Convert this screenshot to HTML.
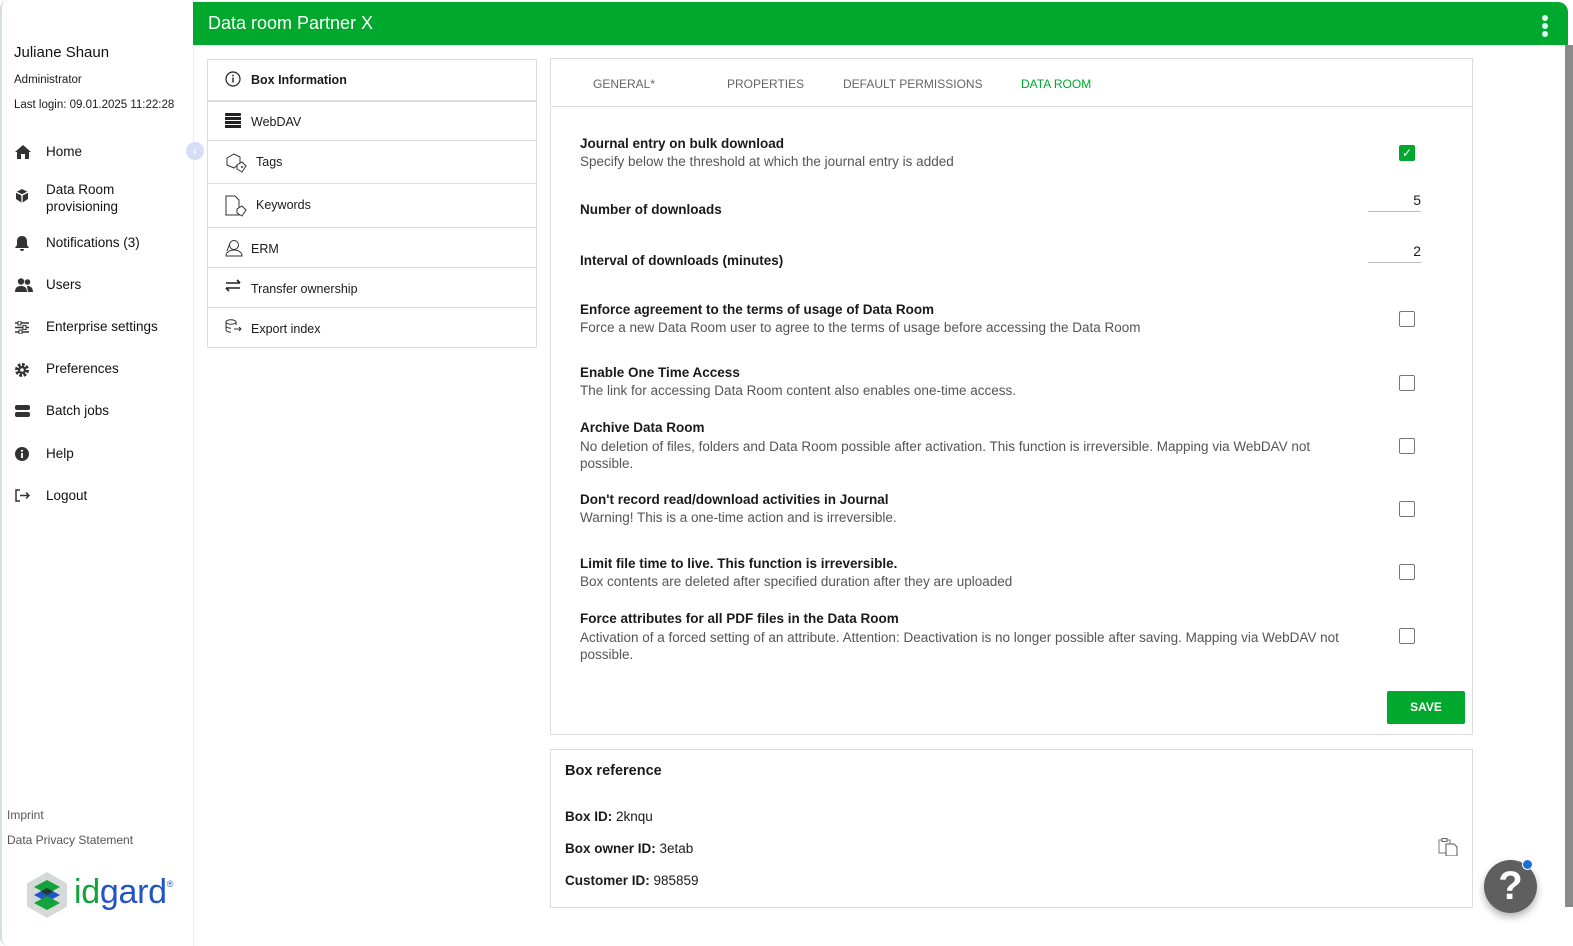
<!DOCTYPE html>
<html><head><style>
*{margin:0;padding:0;box-sizing:border-box}
body{width:1573px;height:946px;overflow:hidden;background:#fff;font-family:"Liberation Sans",sans-serif;color:#1a1a1a;position:relative}
.a{position:absolute;white-space:nowrap}
.side{position:absolute;left:0;top:0;width:194px;height:946px;background:#fff;border-left:2px solid #d3e0e6;border-right:1px solid #eee;border-radius:8px 0 0 8px}
.nav{font-size:13.5px;color:#111}
.ico{position:absolute;left:15px}
.hdr{position:absolute;left:193px;top:2px;width:1375px;height:43px;background:#00a82d;border-radius:0 10px 0 0}
.ln{position:absolute;left:207px;width:330px;border:1px solid #ddd;border-bottom:none;height:41px;font-size:12.5px}
.ln span{position:absolute;left:43px;top:13px}
.ln svg{position:absolute;left:17px;top:11px}
.card{position:absolute;border:1px solid #ddd;background:#fff}
.t{font-size:13.5px;font-weight:bold;color:#1a1a1a}
.s{font-size:13.5px;color:#555}
.cb{position:absolute;left:1399px;width:16px;height:16px;border:1.5px solid #777;border-radius:2px}
.tab{font-size:12px;color:#666;top:77px}
</style></head><body>
<div class="side"></div>
<div class="a" style="left:14px;top:44px;font-size:15px;color:#111">Juliane Shaun</div>
<div class="a" style="left:14px;top:74px;font-size:11.5px">Administrator</div>
<div class="a" style="left:14px;top:99px;font-size:11.5px">Last login: 09.01.2025 11:22:28</div>
<div class="a" style="left:186px;top:142px;width:18px;height:18px;border-radius:50%;background:#d6def5;color:#fff;font-size:12px;text-align:center;line-height:18px">‹</div>

<svg class="ico" style="top:145px" width="16" height="14" viewBox="0 0 16 14"><path d="M8 0L0 7h2v7h4V9h4v5h4V7h2z" fill="#333"/></svg>
<div class="a nav" style="left:46px;top:144px">Home</div>
<svg class="ico" style="top:189px" width="14" height="14" viewBox="0 0 14 14"><path d="M7 0L1 3v7l6 4 6-4V3z" fill="#333"/><path d="M1 3l6 3 6-3M7 6v8" stroke="#fff" stroke-width="1.3" fill="none"/></svg>
<div class="a nav" style="left:46px;top:181px;line-height:17px">Data Room<br>provisioning</div>
<svg class="ico" style="top:236px" width="14" height="15" viewBox="0 0 14 15"><path d="M7 0c-3 0-5 2-5 5v4L0 12h14l-2-3V5c0-3-2-5-5-5zM5 13h4a2 2 0 0 1-4 0z" fill="#333"/></svg>
<div class="a nav" style="left:46px;top:235px">Notifications (3)</div>
<svg class="ico" style="top:278px" width="18" height="14" viewBox="0 0 18 14"><circle cx="6" cy="3.5" r="3.2" fill="#333"/><circle cx="12.5" cy="4" r="2.8" fill="#333"/><path d="M0 14c0-5 3-6 6-6s6 1 6 6zM12 8c3 0 6 1 6 6h-5z" fill="#333"/></svg>
<div class="a nav" style="left:46px;top:277px">Users</div>
<svg class="ico" style="top:321px" width="14" height="13" viewBox="0 0 14 13"><path d="M0 2h14M0 6.5h14M0 11h14" stroke="#333" stroke-width="1.4"/><rect x="3" y="0" width="3" height="4" fill="#fff" stroke="#333"/><rect x="8" y="4.5" width="3" height="4" fill="#fff" stroke="#333"/><rect x="4" y="9" width="3" height="4" fill="#fff" stroke="#333"/></svg>
<div class="a nav" style="left:46px;top:319px">Enterprise settings</div>
<svg class="ico" style="top:363px" width="14" height="14" viewBox="0 0 14 14"><circle cx="7" cy="7" r="5" fill="none" stroke="#333" stroke-width="4" stroke-dasharray="2.5 1.4"/><circle cx="7" cy="7" r="4" fill="#333"/><circle cx="7" cy="7" r="1.8" fill="#fff"/></svg>
<div class="a nav" style="left:46px;top:361px">Preferences</div>
<svg class="ico" style="top:405px" width="15" height="12" viewBox="0 0 15 12"><rect x="0" y="0" width="15" height="5" rx="2" fill="#333"/><rect x="0" y="7" width="15" height="5" rx="2" fill="#333"/></svg>
<div class="a nav" style="left:46px;top:403px">Batch jobs</div>
<svg class="ico" style="top:447px" width="14" height="14" viewBox="0 0 14 14"><circle cx="7" cy="7" r="7" fill="#333"/><rect x="6.1" y="6" width="1.8" height="5" fill="#fff"/><circle cx="7" cy="3.8" r="1.1" fill="#fff"/></svg>
<div class="a nav" style="left:46px;top:446px">Help</div>
<svg class="ico" style="top:489px" width="15" height="13" viewBox="0 0 15 13"><path d="M5 1H1v11h4M5 6.5h9M11 3.5l3 3-3 3" stroke="#333" stroke-width="1.5" fill="none"/></svg>
<div class="a nav" style="left:46px;top:488px">Logout</div>

<div class="a" style="left:7px;top:808px;font-size:12px;color:#555">Imprint</div>
<div class="a" style="left:7px;top:833px;font-size:12px;color:#555">Data Privacy Statement</div>
<svg class="a" style="left:26px;top:872px" width="42" height="46" viewBox="0 0 42 46"><path d="M21 0L41 11.5v23L21 46 1 34.5v-23z" fill="#d5dad8"/><path d="M21 8l13 7-13 7-13-7z" fill="#12a33a"/><path d="M21 16l13 7-13 7-13-7z" fill="#2255c4"/><path d="M21 16l6 3.5-6 3.5-6-3.5z" fill="#1f3d2a"/><path d="M21 24l13 7-13 7-13-7z" fill="#12a33a"/></svg>
<div class="a" style="left:74px;top:873px;font-size:34px;letter-spacing:-0.3px"><span style="color:#12a33a">id</span><span style="color:#2255c4">gard</span><sup style="font-size:9px;color:#2255c4;vertical-align:top;position:relative;top:6px">®</sup></div>

<div class="hdr"></div>
<div class="a" style="left:208px;top:13px;font-size:18px;color:#fff">Data room Partner X</div>
<div class="a" style="left:1542px;top:15px;width:6px"><div style="width:6px;height:6px;border-radius:50%;background:#dffff0;margin-bottom:2px"></div><div style="width:6px;height:6px;border-radius:50%;background:#dffff0;margin-bottom:2px"></div><div style="width:6px;height:6px;border-radius:50%;background:#dffff0"></div></div>
<div class="a" style="left:1565px;top:45px;width:8px;height:862px;background:#8a8a8a"></div>

<div class="ln" style="top:59px"><svg width="16" height="16" viewBox="0 0 16 16"><circle cx="8" cy="8" r="7" fill="none" stroke="#222" stroke-width="1.2"/><rect x="7.3" y="6.5" width="1.4" height="5" fill="#222"/><circle cx="8" cy="4.5" r="0.9" fill="#222"/></svg><span style="font-weight:bold">Box Information</span></div>
<div class="ln" style="top:100px;border-top:2px solid #ddd"><svg width="16" height="15" viewBox="0 0 16 15"><rect y="0" width="16" height="3" rx="1" fill="#222"/><rect y="4" width="16" height="3" fill="#222"/><rect y="8" width="16" height="3" fill="#222"/><rect y="12" width="16" height="3" fill="#222"/></svg><span>WebDAV</span></div>
<div class="ln" style="top:140px;height:43px"><svg width="22" height="22" viewBox="0 0 22 22" style="top:11px"><path d="M2 6l7-4 6 3v6l-6 5-7-3z" fill="none" stroke="#333"/><path d="M12 13l5-3 4 4-4 6-5-3z" fill="#fff" stroke="#333"/><circle cx="17" cy="15" r="1" fill="#333"/></svg><span style="left:48px;top:14px">Tags</span></div>
<div class="ln" style="top:183px;height:44px"><svg width="22" height="22" viewBox="0 0 22 22" style="top:11px"><path d="M1 1h9l4 4v15H1z" fill="none" stroke="#333"/><path d="M12 14l5-3 4 4-4 6-5-3z" fill="#fff" stroke="#333"/></svg><span style="left:48px;top:14px">Keywords</span></div>
<div class="ln" style="top:227px;height:40px"><svg width="18" height="18" viewBox="0 0 18 18"><circle cx="9" cy="6" r="4.5" fill="none" stroke="#333"/><path d="M1 17c0-4 4-6 8-6s8 2 8 6z" fill="none" stroke="#333"/><path d="M5 4l-3 8" stroke="#333"/></svg><span style="top:14px">ERM</span></div>
<div class="ln" style="top:267px;height:40px"><svg width="16" height="13" viewBox="0 0 16 13"><path d="M1 4h14M12 1l3 3M15 9H1M4 12l-3-3" stroke="#222" stroke-width="1.6" fill="none"/></svg><span style="top:14px">Transfer ownership</span></div>
<div class="ln" style="top:307px;height:41px;border-bottom:1px solid #ddd"><svg width="17" height="14" viewBox="0 0 17 14"><ellipse cx="6" cy="3" rx="5" ry="2.2" fill="none" stroke="#333"/><path d="M1 3v8c0 1.3 2.2 2.2 5 2.2M11 3v3M1 7c0 1.3 2.2 2.2 5 2.2M9 10h7M14 8l2 2-2 2" stroke="#333" fill="none"/></svg><span style="top:14px">Export index</span></div>

<div class="card" style="left:550px;top:58px;width:923px;height:677px"></div>
<div class="a" style="left:551px;top:106px;width:921px;height:1px;background:#ddd"></div>
<div class="a tab" style="left:593px">GENERAL*</div>
<div class="a tab" style="left:727px">PROPERTIES</div>
<div class="a tab" style="left:843px">DEFAULT PERMISSIONS</div>
<div class="a tab" style="left:1021px;color:#00a82d">DATA ROOM</div>

<div class="a t" style="left:580px;top:136px">Journal entry on bulk download</div>
<div class="a s" style="left:580px;top:154px">Specify below the threshold at which the journal entry is added</div>
<div class="a" style="left:1399px;top:145px;width:16px;height:16px;background:#00a82d;border-radius:2px;color:#fff;font-size:12px;text-align:center;line-height:16px">✓</div>

<div class="a t" style="left:580px;top:202px">Number of downloads</div>
<div class="a" style="left:1368px;top:192px;width:53px;text-align:right;font-size:14px">5</div>
<div class="a" style="left:1368px;top:211px;width:53px;height:1px;background:#bbb"></div>
<div class="a t" style="left:580px;top:253px">Interval of downloads (minutes)</div>
<div class="a" style="left:1368px;top:243px;width:53px;text-align:right;font-size:14px">2</div>
<div class="a" style="left:1368px;top:262px;width:53px;height:1px;background:#bbb"></div>

<div class="a t" style="left:580px;top:302px">Enforce agreement to the terms of usage of Data Room</div>
<div class="a s" style="left:580px;top:320px">Force a new Data Room user to agree to the terms of usage before accessing the Data Room</div>
<div class="cb" style="top:311px"></div>
<div class="a t" style="left:580px;top:365px">Enable One Time Access</div>
<div class="a s" style="left:580px;top:383px">The link for accessing Data Room content also enables one-time access.</div>
<div class="cb" style="top:375px"></div>
<div class="a t" style="left:580px;top:420px">Archive Data Room</div>
<div class="a s" style="left:580px;top:438px;white-space:normal;width:760px;line-height:17px">No deletion of files, folders and Data Room possible after activation. This function is irreversible. Mapping via WebDAV not possible.</div>
<div class="cb" style="top:438px"></div>
<div class="a t" style="left:580px;top:492px">Don't record read/download activities in Journal</div>
<div class="a s" style="left:580px;top:510px">Warning! This is a one-time action and is irreversible.</div>
<div class="cb" style="top:501px"></div>
<div class="a t" style="left:580px;top:556px">Limit file time to live. This function is irreversible.</div>
<div class="a s" style="left:580px;top:574px">Box contents are deleted after specified duration after they are uploaded</div>
<div class="cb" style="top:564px"></div>
<div class="a t" style="left:580px;top:611px">Force attributes for all PDF files in the Data Room</div>
<div class="a s" style="left:580px;top:629px;white-space:normal;width:810px;line-height:17px">Activation of a forced setting of an attribute. Attention: Deactivation is no longer possible after saving. Mapping via WebDAV not possible.</div>
<div class="cb" style="top:628px"></div>

<div class="a" style="left:1387px;top:691px;width:78px;height:33px;background:#00a82d;border-radius:2px;color:#fff;font-weight:bold;font-size:12px;text-align:center;line-height:33px">SAVE</div>

<div class="card" style="left:550px;top:749px;width:923px;height:159px"></div>
<div class="a" style="left:565px;top:763px;font-size:14.5px;font-weight:bold">Box reference</div>
<div class="a" style="left:565px;top:809px;font-size:13.5px"><b>Box ID:</b> 2knqu</div>
<div class="a" style="left:565px;top:841px;font-size:13.5px"><b>Box owner ID:</b> 3etab</div>
<div class="a" style="left:565px;top:873px;font-size:13.5px"><b>Customer ID:</b> 985859</div>
<svg class="a" style="left:1438px;top:838px" width="20" height="18" viewBox="0 0 20 18"><rect x="1" y="2" width="11" height="13" fill="none" stroke="#8a7a6a"/><rect x="4" y="0.5" width="5" height="3" fill="#fff" stroke="#666"/><path d="M8 6h8l3 3v9H8z" fill="#fff" stroke="#555"/></svg>

<div class="a" style="left:1484px;top:860px;width:53px;height:53px;border-radius:50%;background:#5f5f5f;box-shadow:0 4px 8px rgba(0,0,0,.3);color:#fff;font-size:40px;font-weight:bold;text-align:center;line-height:53px">?</div>
<div class="a" style="left:1522px;top:859px;width:11px;height:11px;border-radius:50%;background:#1f6fd6;border:1.5px solid #fff"></div>
</body></html>
